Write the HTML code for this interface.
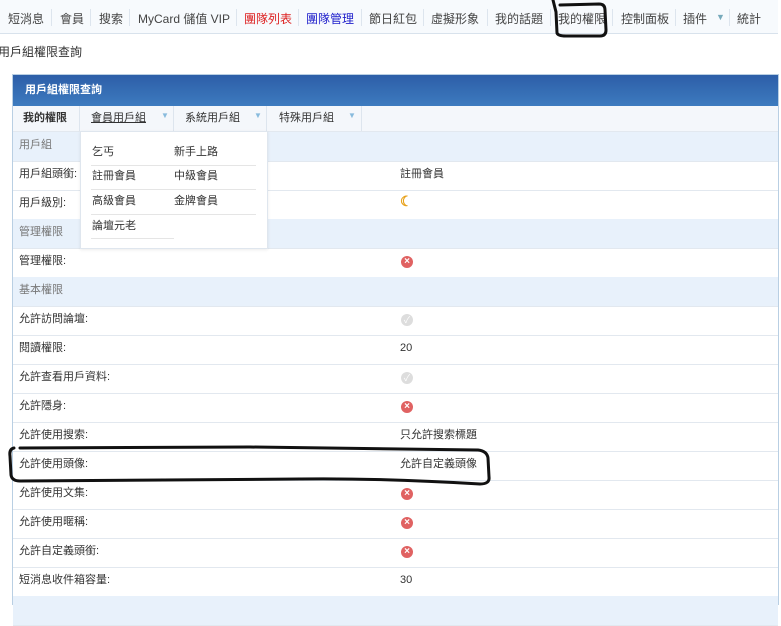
<!DOCTYPE html>
<html><head><meta charset="utf-8"><style>
body{margin:0;width:781px;height:600px;overflow:hidden;background:#fff;font-family:"Liberation Sans","Noto Sans CJK TC",sans-serif;font-size:11px;color:#333;position:relative}
.a{position:absolute;white-space:nowrap}
.nav{position:absolute;left:0;top:0;width:778px;height:33px;background:#f7fafd;border-bottom:1px solid #d8e2ec}
.nav span{position:absolute;top:10px;font-size:12px;color:#444}
.sep{position:absolute;top:9px;width:1px;height:17px;background:#dde5ee}
.tbl{position:absolute;left:12px;top:74px;width:765px;height:530px;border:1px solid #b9cfe3;border-bottom:none}
.hd{position:absolute;left:0;top:0;width:765px;height:31px;background:linear-gradient(#2d5ea8,#3d7bbf);color:#fff;font-weight:bold}
.row{position:absolute;left:0;width:765px;height:29px;border-bottom:1px solid #e2e8ef}
.sec{background:#e8f1fb;color:#777}
.row .l{position:absolute;left:6px;top:4px}
.row .v{position:absolute;left:387px;top:4px}
.x{position:absolute;left:388px;top:8px;width:12px;height:12px;border-radius:50%;background:#e06262;color:#fff;font-size:10px;line-height:12px;text-align:center;font-weight:bold}
.ok{position:absolute;left:388px;top:8px;width:12px;height:12px;border-radius:50%;background:#ddd;color:#fff;font-size:9px;line-height:12px;text-align:center}
</style></head><body>
<div class="nav">
<span style="left:8px">短消息</span><div class="sep" style="left:51px"></div>
<span style="left:60px">會員</span><div class="sep" style="left:90px"></div>
<span style="left:99px">搜索</span><div class="sep" style="left:129px"></div>
<span style="left:138px">MyCard 儲值 VIP</span><div class="sep" style="left:236px"></div>
<span style="left:244px;color:#d22">團隊列表</span><div class="sep" style="left:298px"></div>
<span style="left:306px;color:#22c">團隊管理</span><div class="sep" style="left:361px"></div>
<span style="left:369px">節日紅包</span><div class="sep" style="left:423px"></div>
<span style="left:431px">虛擬形象</span><div class="sep" style="left:487px"></div>
<span style="left:495px">我的話題</span><div class="sep" style="left:550px"></div>
<span style="left:558px">我的權限</span><div class="sep" style="left:612px"></div>
<span style="left:621px">控制面板</span><div class="sep" style="left:675px"></div>
<span style="left:683px">插件</span><span style="left:716px;color:#7ab;font-size:9px;top:12px">▼</span><div class="sep" style="left:729px"></div>
<span style="left:737px">統計</span>
</div>
<div class="a" style="left:-2px;top:43px;font-size:12px">用戶組權限查詢</div>
<div class="tbl">
<div class="hd"><span class="a" style="left:12px;top:6px">用戶組權限查詢</span></div>
<div class="row" style="top:31px;height:25px;background:#f4f7fb">
<span class="a" style="left:10px;top:3px;font-weight:bold;color:#333">我的權限</span>
<div class="a" style="left:66px;top:0;width:1px;height:25px;background:#dde5ee"></div>
<span class="a" style="left:78px;top:3px;text-decoration:underline">會員用戶組</span><span class="a" style="left:148px;top:5px;color:#8bd;font-size:8px">▼</span>
<div class="a" style="left:160px;top:0;width:1px;height:25px;background:#dde5ee"></div>
<span class="a" style="left:172px;top:3px">系統用戶組</span><span class="a" style="left:241px;top:5px;color:#8bd;font-size:8px">▼</span>
<div class="a" style="left:253px;top:0;width:1px;height:25px;background:#dde5ee"></div>
<span class="a" style="left:266px;top:3px">特殊用戶組</span><span class="a" style="left:335px;top:5px;color:#8bd;font-size:8px">▼</span>
<div class="a" style="left:348px;top:0;width:1px;height:25px;background:#dde5ee"></div>
</div>
<div class="row sec" style="top:57px"><span class="l">用戶組</span></div>
<div class="row" style="top:86px"><span class="l">用戶組頭銜:</span><span class="v">註冊會員</span></div>
<div class="row" style="top:115px"><span class="l">用戶級別:</span><span class="v" style="color:#e8a21c;font-size:14px;top:3px;font-weight:bold">☾</span></div>
<div class="row sec" style="top:144px"><span class="l">管理權限</span></div>
<div class="row" style="top:173px"><span class="l">管理權限:</span><span class="x">×</span></div>
<div class="row sec" style="top:202px"><span class="l">基本權限</span></div>
<div class="row" style="top:231px"><span class="l">允許訪問論壇:</span><span class="ok">✓</span></div>
<div class="row" style="top:260px"><span class="l">閱讀權限:</span><span class="v" style="top:7px">20</span></div>
<div class="row" style="top:289px"><span class="l">允許查看用戶資料:</span><span class="ok">✓</span></div>
<div class="row" style="top:318px"><span class="l">允許隱身:</span><span class="x">×</span></div>
<div class="row" style="top:347px"><span class="l">允許使用搜索:</span><span class="v">只允許搜索標題</span></div>
<div class="row" style="top:376px"><span class="l">允許使用頭像:</span><span class="v">允許自定義頭像</span></div>
<div class="row" style="top:405px"><span class="l">允許使用文集:</span><span class="x">×</span></div>
<div class="row" style="top:434px"><span class="l">允許使用暱稱:</span><span class="x">×</span></div>
<div class="row" style="top:463px"><span class="l">允許自定義頭銜:</span><span class="x">×</span></div>
<div class="row" style="top:492px"><span class="l">短消息收件箱容量:</span><span class="v" style="top:7px">30</span></div>
<div class="row sec" style="top:521px"></div>
</div>
<div class="a" style="left:80px;top:131px;width:186px;height:116px;background:#fff;border:1px solid #dfe6ee;box-shadow:0 1px 3px rgba(0,0,0,.08)">
<span class="a" style="left:11px;top:11px">乞丐</span><span class="a" style="left:93px;top:11px">新手上路</span>
<div class="a" style="left:10px;top:33px;width:165px;height:1px;background:#e5e5e5"></div>
<span class="a" style="left:11px;top:35px">註冊會員</span><span class="a" style="left:93px;top:35px">中級會員</span>
<div class="a" style="left:10px;top:57px;width:165px;height:1px;background:#e5e5e5"></div>
<span class="a" style="left:11px;top:60px">高級會員</span><span class="a" style="left:93px;top:60px">金牌會員</span>
<div class="a" style="left:10px;top:82px;width:165px;height:1px;background:#e5e5e5"></div>
<span class="a" style="left:11px;top:85px">論壇元老</span>
<div class="a" style="left:10px;top:106px;width:83px;height:1px;background:#e5e5e5"></div>
</div>
<svg class="a" style="left:0;top:0" width="781" height="600">
<path d="M553 0 L556 12 L557 33 Q558 36 566 36 L600 36 Q606 36 606 30 L605 10 Q605 4 599 4 L560 5" fill="none" stroke="#111" stroke-width="3" stroke-linecap="round"/>
<path d="M14 448 Q9 449 10 456 L11 475 Q12 481 20 481 L300 479 Q380 478 480 484 Q490 484 489 477 L488 458 Q487 451 478 450 L250 447 L20 448" fill="none" stroke="#111" stroke-width="3" stroke-linecap="round"/>
</svg>
</body></html>
